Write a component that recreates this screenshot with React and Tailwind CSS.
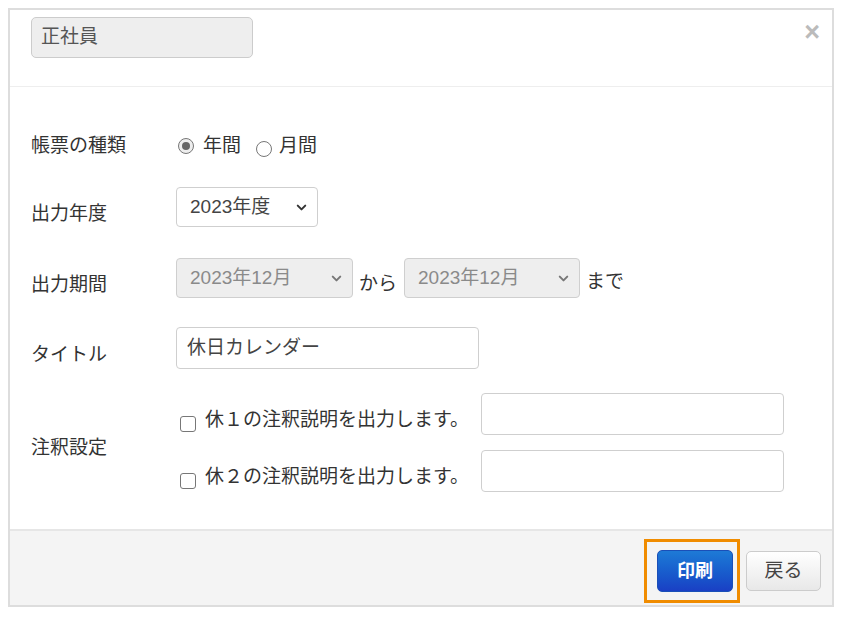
import { ChevronDown } from 'lucide-react'

const FONT = { fontFamily: '"Liberation Sans", "Noto Sans CJK JP", sans-serif' }

function Select({ value, width, disabled }) {
  return (
    <div
      className={`flex h-[40px] items-center justify-between rounded-[4px] border border-[#cfcfcf] pl-[13px] pr-[8px] text-[19px] ${
        disabled ? 'bg-[#eeeeee] text-[#8a8a8a]' : 'bg-white text-[#444]'
      }`}
      style={{ width }}
    >
      <span>{value}</span>
      <ChevronDown size={15} strokeWidth={3.2} className={disabled ? 'text-[#777]' : 'text-[#333]'} />
    </div>
  )
}

function NoteRow({ label }) {
  return (
    <div className="flex items-center">
      <span className="ml-[4px] mt-[20px] inline-block h-[16px] w-[16px] rounded-[3px] border border-[#777] bg-white" />
      <span className="ml-[9px] mr-[12px] mt-[12px]">{label}</span>
      <div className="h-[42px] w-[303px] rounded-[4px] border border-[#cfcfcf]" />
    </div>
  )
}

export default function App() {
  return (
    <div className="h-[619px] w-[843px] bg-white p-[8px] text-[#333]" style={FONT}>
      <div className="flex h-[599px] w-[826px] flex-col border-2 border-[#dddddd]">
        <div className="flex h-[77px] items-start justify-between border-b border-[#eeeeee] pl-[21px] pr-[12px] pt-[7px]">
          <div className="flex h-[41px] w-[222px] items-center rounded-[5px] border border-[#cccccc] bg-[#eeeeee] pl-[9px] text-[19px] text-[#555]">
            正社員
          </div>
          <span className="mt-[2px] text-[27px] font-bold leading-none text-[#bbbbbb]">×</span>
        </div>

        <div className="flex flex-1 flex-col pl-[21px] pt-[45px] text-[19px]">
          <div className="flex h-[28px] items-center">
            <span className="w-[145px]">帳票の種類</span>
            <span className="ml-[2px] flex h-[16px] w-[16px] items-center justify-center rounded-full border border-[#777] bg-[#eee]">
              <span className="h-[8px] w-[8px] rounded-full bg-[#666]" />
            </span>
            <span className="ml-[9px]">年間</span>
            <span className="ml-[15px] mt-[6px] inline-block h-[16px] w-[16px] rounded-full border border-[#777] bg-white" />
            <span className="ml-[7px]">月間</span>
          </div>

          <div className="mt-[27px] flex h-[40px] items-center">
            <span className="mt-[14px] w-[145px]">出力年度</span>
            <Select value="2023年度" width={142} />
          </div>

          <div className="mt-[31px] flex h-[40px] items-center">
            <span className="mt-[14px] w-[145px]">出力期間</span>
            <Select value="2023年12月" width={177} disabled />
            <span className="ml-[6px] mr-[7px] mt-[12px]">から</span>
            <Select value="2023年12月" width={176} disabled />
            <span className="ml-[6px] mt-[8px]">まで</span>
          </div>

          <div className="mt-[29px] flex h-[42px] items-center">
            <span className="mt-[14px] w-[145px]">タイトル</span>
            <div className="flex h-[42px] w-[303px] items-center rounded-[4px] border border-[#cfcfcf] pl-[10px] text-[#444]">
              休日カレンダー
            </div>
          </div>

          <div className="mt-[24px] flex items-center">
            <span className="mt-[11px] w-[145px]">注釈設定</span>
            <div className="flex flex-col gap-[15px]">
              <NoteRow label="休１の注釈説明を出力します。" />
              <NoteRow label="休２の注釈説明を出力します。" />
            </div>
          </div>
        </div>

        <div className="flex h-[76px] items-start justify-end border-t-2 border-[#e6e6e6] bg-[#f4f4f4] pr-[11px] pt-[8px]">
          <div className="border-[3px] border-[#f08c00] pb-[8px] pl-[10px] pr-[4px] pt-[8px]">
            <button
              type="button"
              className="flex h-[42px] w-[76px] items-center justify-center rounded-[5px] border border-[#1a4fb8] bg-gradient-to-b from-[#1e7ad6] to-[#1a3fc4] text-[18px] font-bold text-white"
            >
              印刷
            </button>
          </div>
          <button
            type="button"
            className="ml-[6px] mt-[12px] flex h-[40px] w-[75px] items-center justify-center rounded-[5px] border border-[#cccccc] bg-gradient-to-b from-white to-[#e8e8e8] text-[19px] text-[#444]"
          >
            戻る
          </button>
        </div>
      </div>
    </div>
  )
}
